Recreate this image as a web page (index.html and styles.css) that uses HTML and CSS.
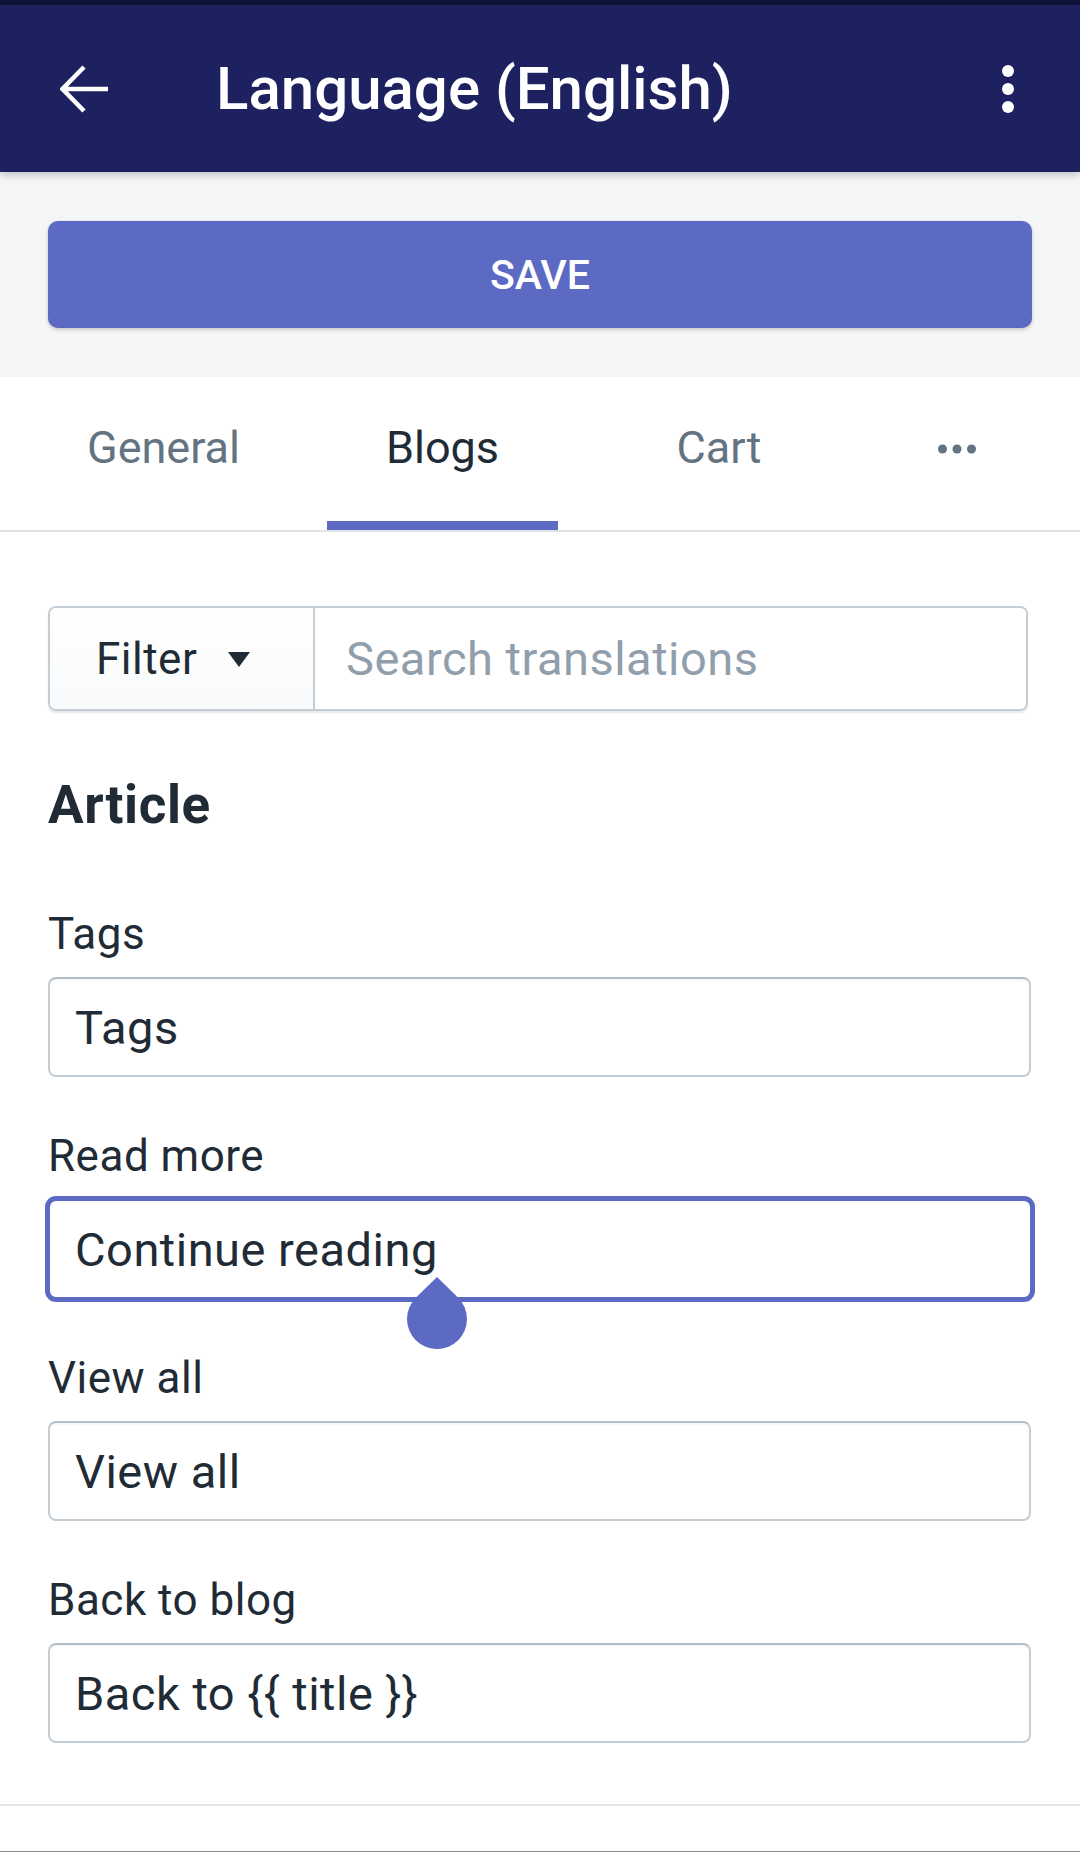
FILE: index.html
```html
<!DOCTYPE html>
<html lang="en">
<head>
<meta charset="utf-8">
<title>Language (English)</title>
<link rel="stylesheet" href="styles.css">
</head>
<body>
<div class="status-strip"></div>
<header class="appbar">
  <svg class="appbar-back" width="48" height="48" viewBox="0 0 48 48" aria-hidden="true">
    <path d="M3 24 H48 M24 2 L2.5 24 L24 46" fill="none" stroke="#fff" stroke-width="4.5" stroke-linejoin="miter"/>
  </svg>
  <h1 class="appbar-title">Language (English)</h1>
  <svg class="appbar-menu" width="12" height="48" viewBox="0 0 12 48" aria-hidden="true">
    <circle cx="6" cy="6" r="6" fill="#fff"/>
    <circle cx="6" cy="24" r="6" fill="#fff"/>
    <circle cx="6" cy="42" r="6" fill="#fff"/>
  </svg>
</header>

<section class="save-area">
  <button class="save-button" type="button">SAVE</button>
</section>

<nav class="tabs">
  <div class="tab">General</div>
  <div class="tab tab-active">Blogs</div>
  <div class="tab">Cart</div>
  <div class="tab tab-more">
    <svg width="38" height="10" viewBox="0 0 38 10" aria-hidden="true">
      <circle cx="4.5" cy="5" r="4.5" fill="#637381"/>
      <circle cx="19" cy="5" r="4.5" fill="#637381"/>
      <circle cx="33.5" cy="5" r="4.5" fill="#637381"/>
    </svg>
  </div>
</nav>

<main class="content">
  <div class="search-box">
    <div class="filter-button">
      <span>Filter</span>
      <svg class="filter-caret" width="22" height="15" viewBox="0 0 22 15" aria-hidden="true">
        <path d="M0 0 H22 L11 15 Z" fill="#212b36"/>
      </svg>
    </div>
    <input class="search-input" type="text" placeholder="Search translations">
  </div>

  <h2 class="section-title">Article</h2>

  <div class="field">
    <label class="field-label">Tags</label>
    <input class="text-input" type="text" value="Tags">
  </div>

  <div class="field">
    <label class="field-label">Read more</label>
    <div class="input-wrap">
      <input class="text-input is-focused" type="text" value="Continue reading">
      <svg class="select-handle" width="60" height="72" viewBox="0 0 60 72" aria-hidden="true">
        <path d="M30 0 L51.2 20.8 A30 30 0 1 1 8.8 20.8 Z" fill="#5c6ac4"/>
      </svg>
    </div>
  </div>

  <div class="field">
    <label class="field-label">View all</label>
    <input class="text-input" type="text" value="View all">
  </div>

  <div class="field">
    <label class="field-label">Back to blog</label>
    <input class="text-input" type="text" value="Back to {{ title }}">
  </div>
</main>

<div class="bottom-area"></div>
</body>
</html>
```

FILE: styles.css
```css
* {
  box-sizing: border-box;
}

html, body {
  margin: 0;
  padding: 0;
  background: #ffffff;
}

body {
  width: 1080px;
  height: 1853px;
  overflow: hidden;
  font-family: Roboto, "Noto Sans", "Liberation Sans", sans-serif;
  color: #212b36;
}

.status-strip {
  height: 5px;
  background: #11143a;
}

.appbar {
  position: relative;
  z-index: 2;
  height: 167px;
  background: #1e2160;
  display: flex;
  align-items: center;
  padding: 0 66px 0 60px;
  box-shadow: 0 3px 8px rgba(0, 0, 0, 0.22);
}

.appbar-back {
  flex: none;
  display: block;
}

.appbar-title {
  flex: 1;
  margin: 0 0 0 108px;
  font-size: 60px;
  font-weight: 500;
  color: #ffffff;
  line-height: 70px;
  letter-spacing: 0;
}

.appbar-menu {
  flex: none;
  display: block;
}

.save-area {
  background: #f4f6f8;
  padding: 49px 48px 49px 48px;
}

.save-button {
  display: block;
  width: 984px;
  height: 107px;
  border: none;
  border-radius: 10px;
  background: #5c6ac4;
  color: #ffffff;
  font-family: Roboto, "Noto Sans", "Liberation Sans", sans-serif;
  font-size: 41px;
  font-weight: 500;
  letter-spacing: 0;
  box-shadow: 0 2px 4px rgba(0, 0, 0, 0.18), 0 0 1px rgba(0, 0, 0, 0.2);
}

.tabs {
  display: grid;
  grid-template-columns: 327px 231px 322px 154px;
  height: 155px;
  border-bottom: 2px solid #dfe3e8;
  background: #ffffff;
}

.tab {
  position: relative;
  display: flex;
  align-items: center;
  justify-content: center;
  padding-bottom: 13px;
  font-size: 45px;
  color: #637381;
}

.tab-active {
  color: #212b36;
}

.tab-active::after {
  content: "";
  position: absolute;
  left: 0;
  right: 0;
  bottom: 0;
  height: 9px;
  background: #5c6ac4;
}

.tab-more {
  padding-bottom: 9px;
}

.content {
  padding: 74px 48px 0 48px;
}

.search-box {
  display: flex;
  width: 980px;
  height: 105px;
  border: 2px solid #c4cdd5;
  border-radius: 8px;
  overflow: hidden;
  box-shadow: 0 2px 2px rgba(63, 63, 68, 0.12);
}

.filter-button {
  flex: none;
  width: 265px;
  display: flex;
  align-items: center;
  padding-left: 46px;
  border-right: 2px solid #c4cdd5;
  background: linear-gradient(to bottom, #ffffff, #f9fafb);
  font-size: 44px;
  letter-spacing: 0.5px;
  color: #212b36;
}

.filter-caret {
  display: block;
  margin-left: 31px;
  margin-top: 2px;
}

.search-input {
  flex: 1;
  min-width: 0;
  border: none;
  outline: none;
  background: #ffffff;
  padding: 0 0 0 31px;
  font-family: Roboto, "Noto Sans", "Liberation Sans", sans-serif;
  font-size: 47px;
  letter-spacing: 0.5px;
  color: #212b36;
}

.search-input::placeholder {
  color: #919eab;
  opacity: 1;
}

.section-title {
  margin: 64px 0 0 0;
  font-size: 53px;
  font-weight: 700;
  line-height: 60px;
  letter-spacing: 0.6px;
  color: #212b36;
}

.field {
  margin-top: 49px;
}

.section-title + .field {
  margin-top: 69px;
}

.field-label {
  display: block;
  font-size: 44px;
  line-height: 60px;
  letter-spacing: 0.5px;
  margin-bottom: 13px;
  color: #212b36;
}

.input-wrap {
  position: relative;
}

.text-input {
  display: block;
  width: 983px;
  height: 100px;
  margin: 0;
  padding: 0 25px;
  border: 2px solid #c4cdd5;
  border-top-color: #b5bec7;
  border-radius: 8px;
  outline: none;
  background: #ffffff;
  box-shadow: inset 0 2px 0 rgba(99, 115, 129, 0.06);
  font-family: Roboto, "Noto Sans", "Liberation Sans", sans-serif;
  font-size: 47px;
  letter-spacing: 0.5px;
  color: #212b36;
}

.text-input.is-focused {
  width: 984px;
  border-color: #5c6ac4;
  box-shadow: 0 0 0 3px #5c6ac4;
}

.select-handle {
  position: absolute;
  left: 359px;
  top: 78px;
  display: block;
}

.bottom-area {
  margin-top: 61px;
  height: 48px;
  border-top: 2px solid #e3e7ea;
  border-bottom: 1px solid #8a8d90;
}
```
